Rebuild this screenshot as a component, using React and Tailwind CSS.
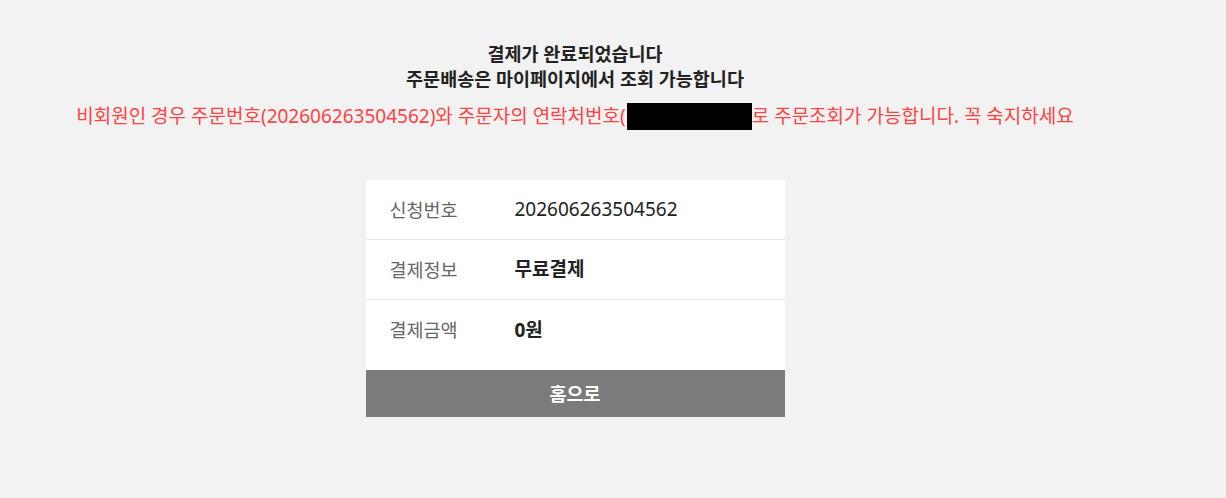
import React from "react";

const font = { fontFamily: '"Noto Sans", "Noto Sans CJK KR", sans-serif' };

function Row({ label, value, bold, last, extra = "" }) {
  return (
    <div
      className={`flex items-center h-[60px] px-6 ${extra} ${
        last ? "" : "border-b border-[#e5e6ea]"
      }`}
    >
      <div className="w-[125px] text-[18.5px] text-[#666]">{label}</div>
      <div className={`text-[19px] text-[#222] ${bold ? "font-bold" : ""}`}>
        {value}
      </div>
    </div>
  );
}

export default function App() {
  return (
    <div className="min-h-[498px] bg-[#f2f2f2] pr-[76px]" style={font}>
      <div className="flex flex-col items-center pt-[41px]">
        <div className="text-center text-[18.5px] font-bold text-[#222] leading-[25px]">
          <p>결제가 완료되었습니다</p>
          <p>주문배송은 마이페이지에서 조회 가능합니다</p>
        </div>

        <p className="mt-[12px] text-[19px] text-[#ff4242] leading-[27px] whitespace-nowrap">
          비회원인 경우 주문번호(202606263504562)와 주문자의 연락처번호(
          <span className="inline-block align-top w-[125px] h-[27px] bg-black ml-[1px]" />
          로 주문조회가 가능합니다. 꼭 숙지하세요
        </p>

        <div className="mt-[50px] w-[419px] bg-white">
          <Row label="신청번호" value="202606263504562" />
          <Row label="결제정보" value="무료결제" bold />
          <Row label="결제금액" value="0원" bold last extra="mb-[10px]" />
          <button className="w-full h-[47px] bg-[#7b7b7b] text-white text-[18.5px] font-bold">
            홈으로
          </button>
        </div>
      </div>
    </div>
  );
}
